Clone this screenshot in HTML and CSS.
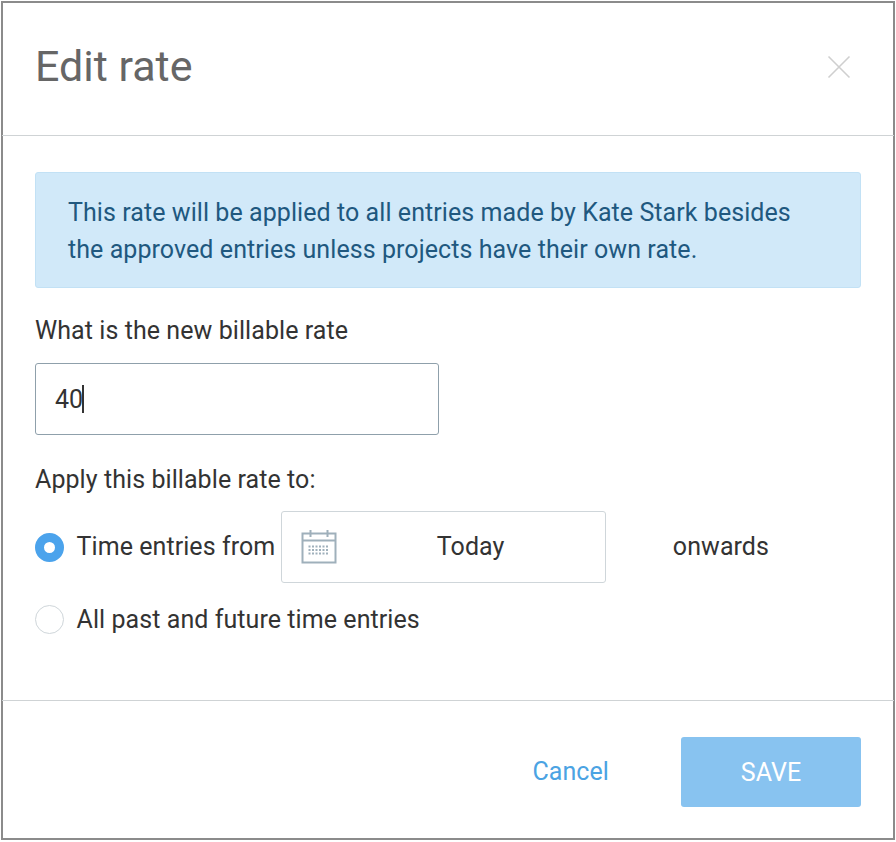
FILE: index.html
```html
<!DOCTYPE html>
<html lang="en">
<head>
<meta charset="utf-8">
<title>Edit rate</title>
<link rel="stylesheet" href="styles.css">
</head>
<body>
<div class="dialog">
  <header class="head">
    <h1 class="title">Edit rate</h1>
    <svg class="close" width="24" height="24" viewBox="0 0 24 24" aria-label="Close"><path d="M1.5 1.5 22.5 22.5M22.5 1.5 1.5 22.5"/></svg>
  </header>
  <main class="body">
    <div class="alert">
      <div>This rate will be applied to all entries made by Kate Stark besides</div>
      <div>the approved entries unless projects have their own rate.</div>
    </div>
    <label class="label first">What is the new billable rate</label>
    <div class="input"><span>40</span><i class="caret"></i></div>
    <div class="label second">Apply this billable rate to:</div>
    <div class="option one">
      <span class="radio on"></span>
      <span class="opt-text raised">Time entries from</span>
      <div class="date">
        <svg class="cal" width="36" height="36" viewBox="0 0 36 36">
          <rect class="cal-line" x="1.5" y="4.5" width="33" height="29"/>
          <path class="cal-line" d="M1.5 11.5H34.500M9.500 1V8M26.500 1V8"/>
          <path class="cal-dots" d="M7.500 17.500H28.500M7.500 21H28.500M7.500 24.500H28.500"/>
        </svg>
        <span class="date-text raised">Today</span>
      </div>
      <span class="onwards raised">onwards</span>
    </div>
    <div class="option two">
      <span class="radio"></span>
      <span class="opt-text">All past and future time entries</span>
    </div>
  </main>
  <footer class="foot">
    <span class="cancel">Cancel</span>
    <span class="save">SAVE</span>
  </footer>
</div>
</body>
</html>
```
FILE: styles.css
```css
* { box-sizing: border-box; }
html, body { margin: 0; padding: 0; background: #fff; }
body { width: 896px; height: 842px; padding: 1px; font-family: Roboto, "Liberation Sans", sans-serif; color: #333; font-size: 25px; letter-spacing: 0.07px; }
.dialog { width: 894px; height: 839px; border: 2px solid #8b8b8b; display: flex; flex-direction: column; background: #fff; }
.head { height: 133px; flex: none; border-bottom: 1px solid #cfd3d5; display: flex; align-items: center; justify-content: space-between; margin: 0 -1px; padding: 0 43px 6px 33px; }
.title { margin: 0; font-size: 43px; font-weight: 400; color: #666; line-height: 50px; letter-spacing: 0; }
.close { display: block; margin-top: 1px; fill: none; stroke: #cfcfcf; stroke-width: 1.6; }
.body { flex: 1; padding: 36px 32px 0; }
.alert { height: 116px; background: #d1e9f9; border: 1px solid #c2e1f5; border-radius: 3px; color: #20587f; padding: 21px 32px 0; line-height: 37px; }
.label { line-height: 30px; }
.first { display: block; margin-top: 28px; }
.input { width: 404px; height: 72px; margin-top: 17px; border: 1px solid #8fa0ab; border-radius: 3px; display: flex; align-items: center; padding-left: 19px; }
.caret { display: block; width: 2px; height: 28px; background: #333; margin-left: -1px; }
.second { margin-top: 30px; }
.option { display: flex; align-items: center; }
.one { margin-top: 16px; height: 72px; }
.two { height: 72px; }
.raised { margin-bottom: 2px; }
.radio { width: 29px; height: 29px; border-radius: 50%; border: 1px solid #cfd6da; flex: none; background: #fff; }
.radio.on { border: 9.5px solid #4ba3ec; }
.opt-text { margin-left: 12.5px; }
.date { width: 325px; height: 72px; margin-left: 5.5px; border: 1px solid #cfd6da; border-radius: 3px; display: flex; align-items: center; padding-left: 19px; flex: none; }
.cal { display: block; flex: none; }
.cal-line { fill: none; stroke: #9fb0bb; stroke-width: 2; }
.cal-dots { fill: none; stroke: #9fb0bb; stroke-width: 2; stroke-dasharray: 2 1.500; }
.date-text { margin-left: 100px; }
.onwards { margin-left: 67px; }
.foot { height: 138px; flex: none; border-top: 1px solid #cfd3d5; margin: 0 -1px; display: flex; align-items: flex-start; justify-content: flex-end; padding: 36px 33px 0 0; }
.cancel { color: #4ba3e3; margin-right: 72px; line-height: 70px; }
.save { width: 180px; height: 70px; background: #88c3f0; color: #fff; border-radius: 3px; display: flex; align-items: center; justify-content: center; }
```
